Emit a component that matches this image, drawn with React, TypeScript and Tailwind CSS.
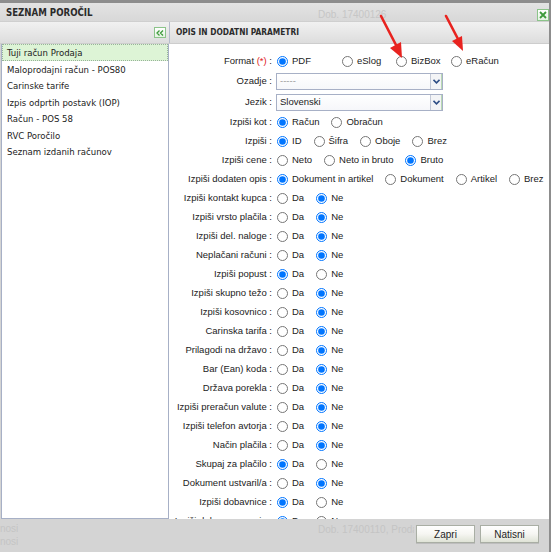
import * as React from "react";

const narrow = "font-['DejaVu_Sans_Condensed','Liberation_Sans_Narrow','Liberation_Sans',sans-serif]";

const reports = [
  "Tuji račun Prodaja",
  "Maloprodajni račun - POS80",
  "Carinske tarife",
  "Izpis odprtih postavk (IOP)",
  "Račun - POS 58",
  "RVC Poročilo",
  "Seznam izdanih računov",
];

const yesNo: [string, boolean][] = [
  ["Izpiši kontakt kupca", false],
  ["Izpiši vrsto plačila", false],
  ["Izpiši del. naloge", false],
  ["Neplačani računi", false],
  ["Izpiši popust", true],
  ["Izpiši skupno težo", false],
  ["Izpiši kosovnico", false],
  ["Carinska tarifa", false],
  ["Prilagodi na državo", false],
  ["Bar (Ean) koda", false],
  ["Država porekla", false],
  ["Izpiši preračun valute", false],
  ["Izpiši telefon avtorja", false],
  ["Način plačila", false],
  ["Skupaj za plačilo", true],
  ["Dokument ustvaril/a", false],
  ["Izpiši dobavnice", true],
  ["Izpiši dobavne pogoje", true],
];

function Radio({ name, label, checked }: { name: string; label: string; checked?: boolean }) {
  return (
    <label className="flex items-center gap-[4px] shrink-0">
      <input type="radio" name={name} defaultChecked={checked} className="m-0 w-[11px] h-[11px]" />
      <span>{label}</span>
    </label>
  );
}

function Row({ label, h = "h-[19px]", children }: { label: React.ReactNode; h?: string; children: React.ReactNode }) {
  return (
    <div className={`flex items-center ${h}`}>
      <div className="w-[103px] text-right whitespace-nowrap">{label}</div>
      <div className="ml-[5px] flex items-center gap-[12px] whitespace-nowrap">{children}</div>
    </div>
  );
}

function FakeSelect({ value, muted }: { value: string; muted?: boolean }) {
  return (
    <div className="-ml-[1px] w-[167px] h-[17px] flex border border-[#a7b0c6] bg-gradient-to-b from-white to-[#f6f7fa]">
      <div className={`flex-1 flex items-center px-[3px] ${muted ? "text-[#9a9a9a]" : "text-[#222]"}`}>{value}</div>
      <div className="w-[12px] flex items-center justify-center border-l border-[#c3c9d6] border-r border-r-[#b9d9b4] bg-[#f3f4f6]">
        <svg width="7" height="5" viewBox="0 0 7 5">
          <path d="M0.5 0.8 L3.5 3.8 L6.5 0.8" fill="none" stroke="#2f4f86" strokeWidth="1.6" />
        </svg>
      </div>
    </div>
  );
}

export default function App() {
  return (
    <div className="relative w-[551px] h-[552px] overflow-hidden flex flex-col bg-[#d4d4d4] border-t-[3px] border-r-2 border-[#8d8d8d] text-[#222]">
      {/* title bar */}
      <div className="relative h-[19px] flex items-center pl-[6px] pt-[2px] bg-gradient-to-b from-[#e3e3e3] to-[#d8d8d8] border-b border-[#cfcfcf]">
        <span className={`${narrow} font-bold text-[9.6px] text-[#2b2b2b]`}>SEZNAM POROČIL</span>
        <span className="absolute left-[318px] top-[4px] font-['Liberation_Sans',sans-serif] text-[10px] text-[#c6c6c6]">Dob. 17400126</span>
        <button className="absolute right-[0px] top-[6px] w-[12px] h-[12px] flex items-center justify-center border border-[#8cc48a] bg-gradient-to-b from-white to-[#e4f3e2]">
          <svg width="8" height="8" viewBox="0 0 8 8">
            <path d="M1 1 L7 7 M7 1 L1 7" stroke="#3d9a3a" strokeWidth="1.8" />
          </svg>
        </button>
      </div>

      {/* panel headers */}
      <div className="h-[22px] flex bg-gradient-to-b from-[#f1f1f1] to-[#dddddd] border-b border-[#cdcdcd]">
        <div className="w-[169px] flex items-center justify-end pr-[3px]">
          <button className="w-[12px] h-[11px] flex items-center justify-center border border-[#8cc48a] bg-gradient-to-b from-white to-[#e4f3e2]">
            <svg width="8" height="6" viewBox="0 0 8 6">
              <path d="M3.5 0.5 L1 3 L3.5 5.5 M7 0.5 L4.5 3 L7 5.5" fill="none" stroke="#3d9a3a" strokeWidth="1.3" />
            </svg>
          </button>
        </div>
        <div className="flex-1 flex items-center pl-[6px] border-l border-[#b7bdcc]">
          <span className={`${narrow} font-bold text-[8.3px] text-[#2b2b2b]`}>OPIS IN DODATNI PARAMETRI</span>
        </div>
      </div>

      {/* body */}
      <div className="flex-1 min-h-0 flex">
        <div className={`w-[168px] ml-[1px] bg-white border border-t-0 border-[#a7b0c6] ${narrow} text-[9.5px]`}>
          {reports.map((r, i) => (
            <div
              key={r}
              className={
                i === 0
                  ? "h-[17px] flex items-center pl-[4px] pt-[1px] bg-[#ddf4d6] border border-dotted border-[#98b39a]"
                  : "h-[16.5px] flex items-center pl-[5px] pt-[1px]"
              }
            >
              {r}
            </div>
          ))}
        </div>
        <div className="flex-1 min-w-0 overflow-hidden bg-white pt-[7px] font-['Liberation_Sans',sans-serif] text-[9.5px]">
          <Row h="h-[20px]" label={<>Format <span className="text-[#e02020]">(*)</span> :</>}>
            <div className="flex items-center">
              <div className="w-[65px]"><Radio name="fmt" label="PDF" checked /></div>
              <div className="w-[54px]"><Radio name="fmt" label="eSlog" /></div>
              <div className="w-[55px]"><Radio name="fmt" label="BizBox" /></div>
              <Radio name="fmt" label="eRačun" />
            </div>
          </Row>
          <Row h="h-[21px]" label="Ozadje :">
            <FakeSelect value="-----" muted />
          </Row>
          <Row h="h-[20px]" label="Jezik :">
            <FakeSelect value="Slovenski" />
          </Row>
          <Row h="h-[20px]" label="Izpiši kot :">
            <Radio name="kot" label="Račun" checked />
            <Radio name="kot" label="Obračun" />
          </Row>
          <Row label="Izpiši :">
            <Radio name="izp" label="ID" checked />
            <Radio name="izp" label="Šifra" />
            <Radio name="izp" label="Oboje" />
            <Radio name="izp" label="Brez" />
          </Row>
          <Row label="Izpiši cene :">
            <Radio name="cene" label="Neto" />
            <Radio name="cene" label="Neto in bruto" />
            <Radio name="cene" label="Bruto" checked />
          </Row>
          <Row label="Izpiši dodaten opis :">
            <Radio name="opis" label="Dokument in artikel" checked />
            <Radio name="opis" label="Dokument" />
            <Radio name="opis" label="Artikel" />
            <Radio name="opis" label="Brez" />
          </Row>
          {yesNo.map(([label, da], i) => (
            <Row key={label} label={`${label} :`}>
              <Radio name={`yn${i}`} label="Da" checked={da} />
              <Radio name={`yn${i}`} label="Ne" checked={!da} />
            </Row>
          ))}
        </div>
      </div>

      {/* footer */}
      <div className="relative h-[33px] flex items-start justify-end gap-[5px] pt-[6px] pr-[10px] bg-[#d4d4d4] font-['Liberation_Sans',sans-serif] text-[10px]">
        <div className="absolute left-0 top-[3px] leading-[13px] text-[#c4c4c4]">
          <div>nosi</div>
          <div>nosi</div>
        </div>
        <span className="absolute left-[318px] top-[3px] w-[96px] overflow-hidden whitespace-nowrap text-[#c4c4c4]">Dob. 17400110, Prodajna</span>
        <button className="relative w-[59px] h-[18px] border border-[#a9aea4] bg-gradient-to-b from-white via-[#f6f6f2] to-[#dfe3d6] text-[#1e1e1e] shadow-[0_1px_0_#bdbdbd]">Zapri</button>
        <button className="relative w-[59px] h-[18px] border border-[#a9aea4] bg-gradient-to-b from-white via-[#f6f6f2] to-[#dfe3d6] text-[#1e1e1e] shadow-[0_1px_0_#bdbdbd]">Natisni</button>
      </div>

      {/* annotation arrows */}
      <svg className="absolute left-0 top-0 pointer-events-none" width="551" height="552">
        <g stroke="#e8231f" strokeWidth="2.6" strokeLinecap="round">
          <line x1="381" y1="13" x2="396" y2="42" />
          <line x1="446" y1="13" x2="458" y2="36" />
        </g>
        <g fill="#e8231f">
          <polygon points="402,55 390,45 401,39" />
          <polygon points="463,48 452,38 462,33" />
        </g>
      </svg>
    </div>
  );
}
